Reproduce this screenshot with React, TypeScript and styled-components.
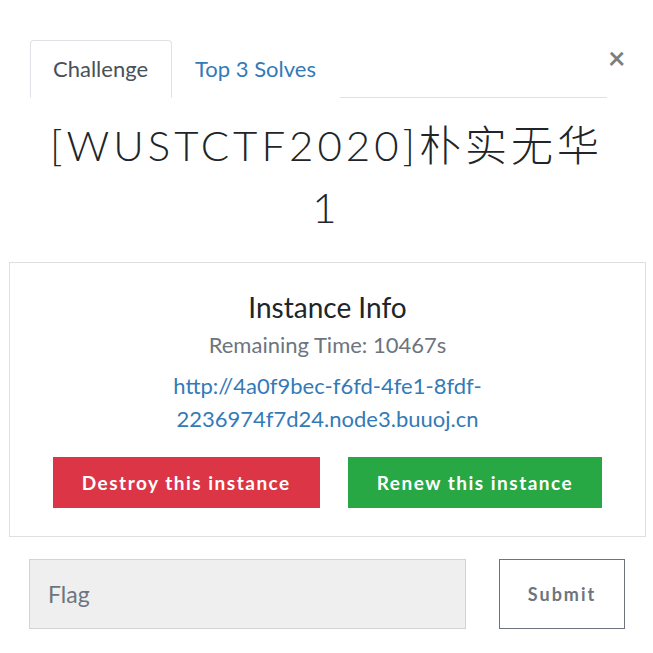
import React from "react";
import styled, { createGlobalStyle } from "styled-components";

const Global = createGlobalStyle`
  html, body { margin: 0; padding: 0; background: #fff; }
  body { font-family: Lato, "Noto Sans CJK SC", sans-serif; color: #212529; }
  * { box-sizing: border-box; }
`;

const Page = styled.div`
  width: 653px;
  padding-top: 40px;
`;

const Header = styled.div`
  display: flex;
  align-items: flex-start;
  padding-left: 30px;
`;

const Nav = styled.ul`
  display: flex;
  list-style: none;
  margin: 0;
  padding: 0;
  width: 577px;
  border-bottom: 1px solid #dee2e6;
`;

const Tab = styled.li<{ $active?: boolean }>`
  margin-bottom: -1px;
  height: 58px;
  padding: 0 23px 0 22px;
  line-height: 56px;
  font-size: 22px;
  color: ${(p) => (p.$active ? "#495057" : "#337ab7")};
  border: 1px solid ${(p) => (p.$active ? "#dee2e6" : "transparent")};
  border-bottom-color: ${(p) => (p.$active ? "#fff" : "transparent")};
  border-radius: 4px 4px 0 0;
  background: #fff;
`;

const Close = styled.button`
  border: 0;
  background: transparent;
  padding: 0;
  margin: 2px 0 0 1px;
  font-family: Lato, sans-serif;
  font-size: 30px;
  font-weight: 700;
  line-height: 30px;
  color: #000;
  opacity: 0.5;
`;

const Title = styled.h3`
  margin: 17px 0 0;
  text-align: center;
  font-family: Lato, "Noto Sans CJK SC", sans-serif;
  font-weight: 300;
  font-size: 42px;
  line-height: 60px;
  letter-spacing: 4px;
  color: #212529;
`;

const Value = styled(Title).attrs({ as: "h4" })`
  margin-top: 2px;
`;

const InfoBox = styled.div`
  margin: 25px 7px 0 9px;
  border: 1px solid #dfdfdf;
  padding: 27px 0 28px;
  text-align: center;
`;

const InfoTitle = styled.div`
  font-size: 28px;
  line-height: 34px;
  color: #212529;
`;

const Remaining = styled.div`
  margin-top: 6px;
  font-size: 22px;
  line-height: 30px;
  color: #6c757d;
`;

const Link = styled.a`
  display: block;
  margin: 9px auto 0;
  width: 500px;
  font-size: 22px;
  line-height: 33px;
  color: #337ab7;
  text-decoration: none;
`;

const Actions = styled.div`
  display: flex;
  justify-content: center;
  gap: 28px;
  margin-top: 22px;
`;

const ActionButton = styled.button<{ $variant: "danger" | "success" }>`
  height: 51px;
  padding: 0 29px;
  border: 0;
  border-radius: 0;
  background: ${(p) => (p.$variant === "danger" ? "#dc3545" : "#28a745")};
  color: #fff;
  font-family: Lato, sans-serif;
  font-weight: 700;
  font-size: 19px;
  letter-spacing: 1.5px;
`;

const FlagRow = styled.div`
  display: flex;
  margin: 22px 0 0 29px;
  gap: 33px;
`;

const FlagInput = styled.input`
  width: 437px;
  height: 70px;
  padding: 0 18px;
  background: #efefef;
  border: 1px solid #d3d3d3;
  border-radius: 0;
  font-family: Lato, sans-serif;
  font-size: 23px;
  color: #495057;
  &::placeholder { color: #6c757d; }
`;

const SubmitButton = styled.button`
  width: 126px;
  height: 70px;
  background: #fff;
  border: 1px solid #6c757d;
  border-radius: 0;
  color: #6c757d;
  font-family: Lato, sans-serif;
  font-weight: 700;
  font-size: 18px;
  letter-spacing: 2px;
`;

export default function App() {
  return (
    <Page>
      <Global />
      <Header>
        <Nav>
          <Tab $active>Challenge</Tab>
          <Tab>Top 3 Solves</Tab>
        </Nav>
        <Close aria-label="Close">×</Close>
      </Header>
      <Title>[WUSTCTF2020]朴实无华</Title>
      <Value>1</Value>
      <InfoBox>
        <InfoTitle>Instance Info</InfoTitle>
        <Remaining>Remaining Time: 10467s</Remaining>
        <Link href="#">http://4a0f9bec-f6fd-4fe1-8fdf-2236974f7d24.node3.buuoj.cn</Link>
        <Actions>
          <ActionButton $variant="danger">Destroy this instance</ActionButton>
          <ActionButton $variant="success">Renew this instance</ActionButton>
        </Actions>
      </InfoBox>
      <FlagRow>
        <FlagInput placeholder="Flag" />
        <SubmitButton>Submit</SubmitButton>
      </FlagRow>
    </Page>
  );
}
